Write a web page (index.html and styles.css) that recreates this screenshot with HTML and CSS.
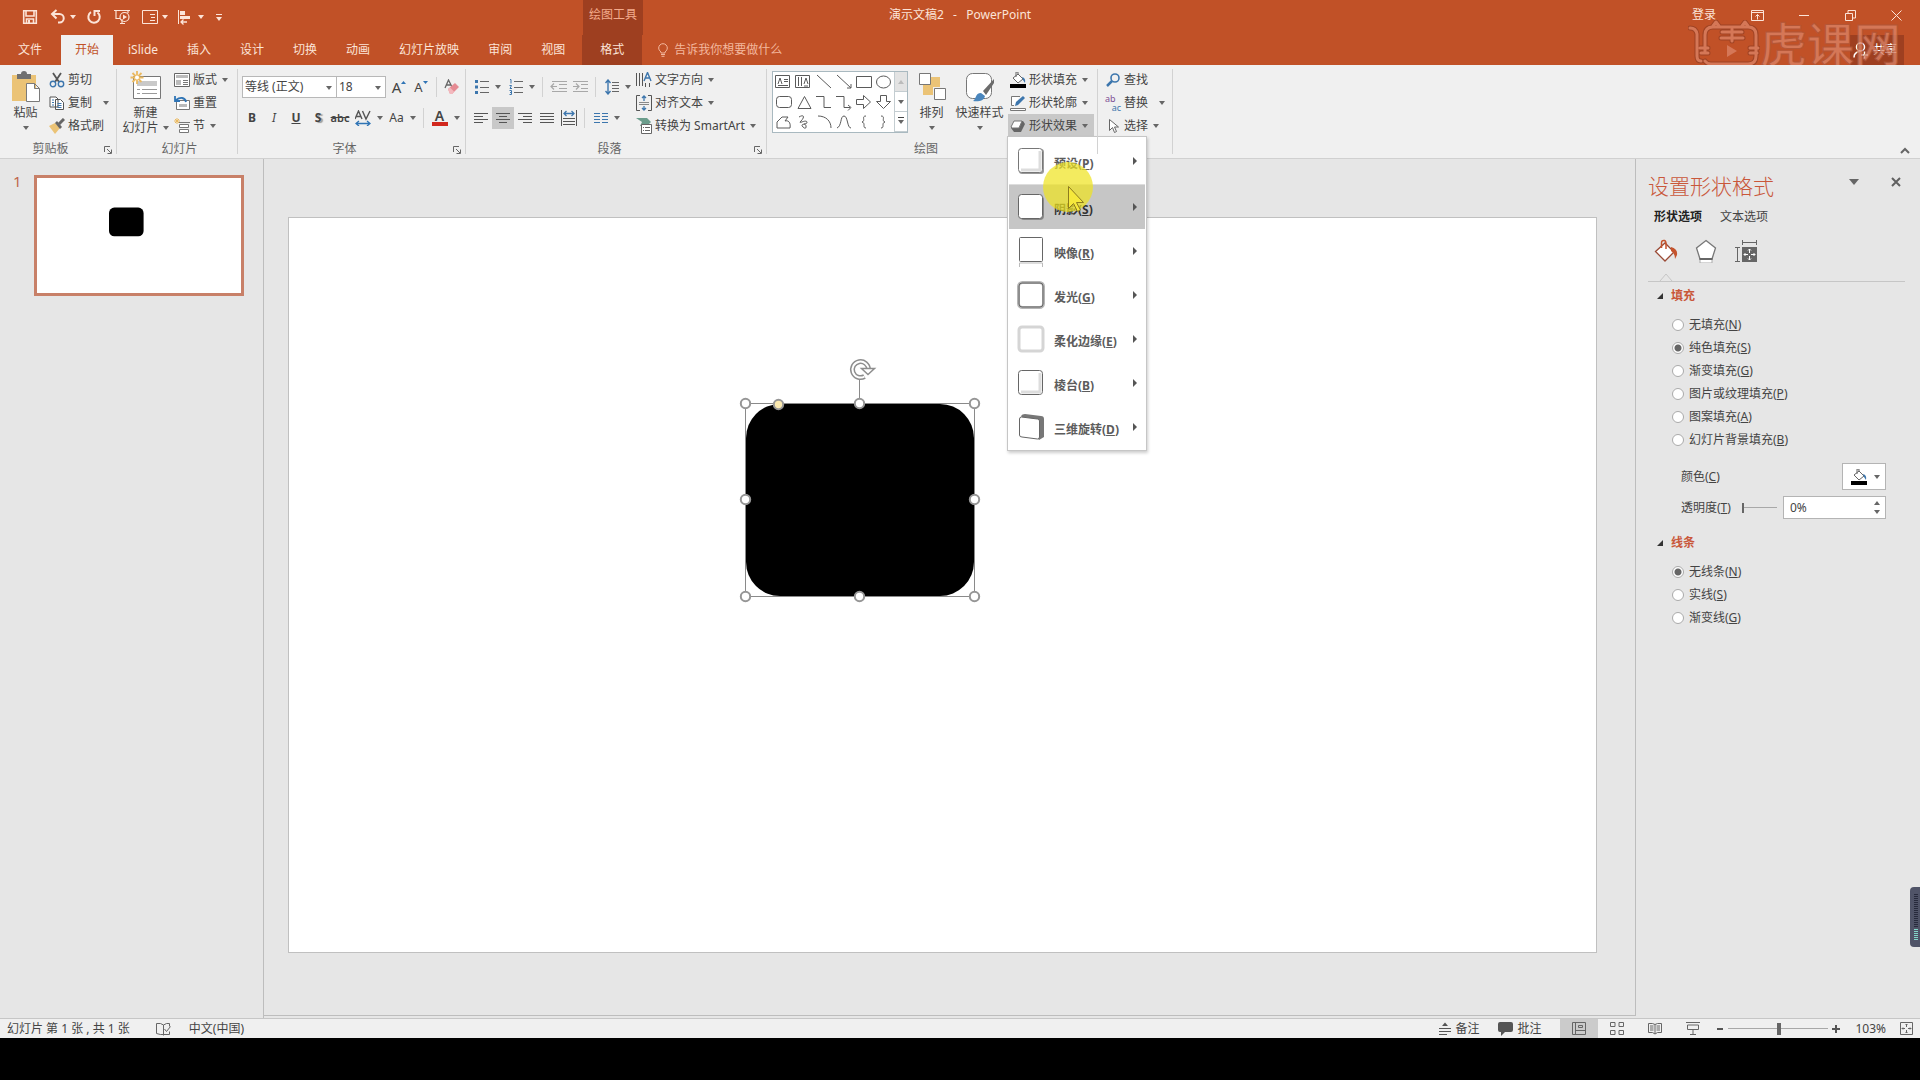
FILE: index.html
```html
<!DOCTYPE html>
<html lang="zh-CN">
<head>
<meta charset="utf-8">
<meta name="viewport" content="width=device-width, initial-scale=1">
<title>演示文稿2 - PowerPoint</title>
<link rel="stylesheet" href="styles.css">
</head>
<body>
<div class="app">

<header class="header">
  <div class="titlebar">
    <div class="title-left">
      <div class="qat">
        <button class="qat-btn" aria-label="保存"><svg width="16" height="16" viewBox="0 0 16 16"><path d="M1.700 1.700h12.600v12.600H1.700zM4 2v5h8V2M4.500 14v-4h7v4" fill="none" stroke="currentColor" stroke-width="1.600"/><path d="M6 11h2v3H6z" fill="currentColor"/></svg></button>
        <button class="qat-btn split" aria-label="撤消"><svg width="16" height="16" viewBox="0 0 16 16"><path d="M2 5h7.500a4.200 4.200 0 0 1 0 8.500H8M6.500 1L2 5l4.500 4.500" fill="none" stroke="currentColor" stroke-width="2"/></svg><i class="caret"></i></button>
        <button class="qat-btn" aria-label="重复"><svg width="16" height="16" viewBox="0 0 16 16"><path d="M5 3.200A5.700 5.700 0 1 0 11.500 3.500M8.500 7V2h5.500" fill="none" stroke="currentColor" stroke-width="2"/></svg></button>
        <button class="qat-btn" aria-label="从头开始"><svg width="16" height="16" viewBox="0 0 16 16"><path d="M0 1.500h16M2 2v7.500h4M14 2v2M6 14.500h5M8 10v4" fill="none" stroke="currentColor" stroke-width="1.200"/><circle cx="10.500" cy="8" r="4.500" fill="none" stroke="currentColor" stroke-width="1.200"/><path d="M9 5.500v5l4-2.500z" fill="currentColor"/></svg></button>
        <button class="qat-btn split" aria-label="版式"><svg width="16" height="16" viewBox="0 0 16 16"><path d="M.5 1.500h15v13H.5zM8 5.500h5M9 8.500h4M8 11.500h5" fill="none" stroke="currentColor"/></svg><i class="caret"></i></button>
        <button class="qat-btn split" aria-label="对齐"><svg width="16" height="16" viewBox="0 0 16 16"><path d="M.5 1v14" stroke="currentColor"/><path d="M2 2h5v4H2zM2 7h10v3H2z" fill="currentColor"/><path d="M9 13H3M5.500 10.500L3 13l2.500 2.500" fill="none" stroke="currentColor" stroke-width="1.300"/></svg><i class="caret"></i></button>
        <button class="qat-btn" aria-label="自定义快速访问工具栏"><i class="caret over"></i></button>
      </div>
      <div class="context-title">绘图工具</div>
    </div>
    <h1 class="doc-title">演示文稿2&nbsp;&nbsp; -&nbsp;&nbsp; PowerPoint</h1>
    <div class="window-tools">
      <a class="login" href="#login">登录</a>
      <button class="win-btn" aria-label="功能区显示选项"><svg width="13" height="11" viewBox="0 0 13 11"><path d="M.5.5h12v10H.5zM.5 2.500h12M6.500 9.500V4.500M4.500 6.500l2-2 2 2" fill="none" stroke="currentColor"/></svg></button>
      <button class="win-btn" aria-label="最小化"><svg width="11" height="11" viewBox="0 0 11 11"><path d="M0 5.500h10" stroke="currentColor"/></svg></button>
      <button class="win-btn" aria-label="还原"><svg width="11" height="11" viewBox="0 0 11 11"><path d="M.5 3.500h7v7h-7zM3 3V.5h7.500V8H8" fill="none" stroke="currentColor"/></svg></button>
      <button class="win-btn" aria-label="关闭"><svg width="11" height="11" viewBox="0 0 11 11"><path d="M.5.5l10 10M10.500.5l-10 10" stroke="currentColor"/></svg></button>
    </div>
  </div>
  <nav class="tabs">
    <button class="tab file">文件</button>
    <button class="tab active">开始</button>
    <button class="tab">iSlide</button>
    <button class="tab">插入</button>
    <button class="tab">设计</button>
    <button class="tab">切换</button>
    <button class="tab">动画</button>
    <button class="tab">幻灯片放映</button>
    <button class="tab">审阅</button>
    <button class="tab">视图</button>
    <button class="tab context">格式</button>
    <button class="tell-me"><svg width="12" height="14" viewBox="0 0 12 14"><path d="M4 10V9C2.500 7.800 1.700 6.500 1.700 5a4.300 4.300 0 0 1 8.600 0c0 1.500-.8 2.800-2.300 4v1zM4 11.500h4M4.500 13.300h3" fill="none" stroke="currentColor"/></svg>告诉我你想要做什么</button>
    <button class="share"><svg width="16" height="17" viewBox="0 0 16 17"><circle cx="7.500" cy="5" r="4" fill="none" stroke="currentColor" stroke-width="1.500"/><path d="M1 15.500c0-3 2-5.500 5.500-6M8 13h7M11.500 9.500v7" fill="none" stroke="currentColor" stroke-width="1.500"/></svg>共享</button>
  </nav>
  <div class="watermark">
    <svg width="72" height="48" viewBox="0 0 72 48" fill="none" stroke-linecap="round" stroke-linejoin="round">
      <g stroke="#943f24" stroke-width="5"><path d="M2 8q6 0 7 6v22q0 5 4 5M17 41q2 3 6 3h37q8 0 8-8V15q0-8-8-8H25q-8 0-8 8v18M25 6l3-4 3 4M54 6l3-4 3 4M34 12h20M44 9v12M33 18h22M12 28h8M13 33h7M62 28h8M62 33h7"/></g>
      <g stroke="#dc8468" stroke-width="3"><path d="M2 8q6 0 7 6v22q0 5 4 5M17 41q2 3 6 3h37q8 0 8-8V15q0-8-8-8H25q-8 0-8 8v18M25 6l3-4 3 4M54 6l3-4 3 4M34 12h20M44 9v12M33 18h22M12 28h8M13 33h7M62 28h8M62 33h7"/></g>
      <path d="M39 25v12l10-6z" fill="#dc8468"/>
    </svg>
    <span>虎课网</span>
  </div>
</header>

<section class="ribbon">
  <div class="group clipboard">
    <div class="group-body">
      <button class="big"><svg width="30" height="32" viewBox="0 0 30 32"><path d="M1 4h24v26H1z" fill="#ebc376"/><path d="M6 3h4a3 3 0 0 1 6 0h4v5H6z" fill="#707070"/><path d="M15.500 12.500h8l5 5v13h-13zM23.500 12.500v5h5" fill="#fff" stroke="#7a7a7a"/></svg><span>粘贴</span><i class="caret"></i></button>
      <div class="rows">
        <button class="row"><svg width="16" height="16" viewBox="0 0 16 16"><path d="M4 1l6 9M12 1l-6 9" stroke="#555" stroke-width="1.800"/><g fill="none" stroke="#3d76ad" stroke-width="1.400"><circle cx="4" cy="12" r="2.700"/><circle cx="12" cy="12" r="2.700"/></g></svg>剪切</button>
        <button class="row"><svg width="16" height="16" viewBox="0 0 16 16"><path d="M1 2h6l2 2v8H1zM6.500 4.500h5l3 3v7h-8z" fill="#fff" stroke="#555"/><path d="M3 5h2M3 7.500h2M3 10h2M8.500 8.500h4M8.500 10.500h4M8.500 12.500h4" stroke="#3d76ad"/></svg>复制<i class="caret far"></i></button>
        <button class="row"><svg width="16" height="16" viewBox="0 0 16 16"><path d="M0 8l6-3 5 5-5 6z" fill="#ebc376"/><path d="M6 5l2-2 5 6-2 2z" fill="#666"/><path d="M10 6l5-5" stroke="#666" stroke-width="3"/></svg>格式刷</button>
      </div>
    </div>
    <div class="group-label launch">剪贴板<button class="launcher" aria-label="剪贴板设置"><svg width="8" height="8" viewBox="0 0 8 8"><path d="M.5 6V.5H6M3 3l4 4M7.500 3.500v4h-4" fill="none" stroke="currentColor"/></svg></button></div>
  </div>

  <div class="group slides">
    <div class="group-body">
      <button class="big"><svg width="32" height="32" viewBox="0 0 32 32"><path d="M3.500 5.500h27v22h-27z" fill="#fff" stroke="#777"/><path d="M7 10h20v5H7z" fill="#c9c9c9"/><path d="M7 18.500h3M12 18.500h15M7 22.500h3M12 22.500h15" stroke="#999"/><path d="M7 0v13M.5 6.500h13M2.500 2l9 9M11.500 2l-9 9" stroke="#ebb95f" stroke-width="1.800"/><circle cx="7" cy="6.500" r="2" fill="#fff"/></svg><span>新建</span><span class="with-caret">幻灯片<i class="caret"></i></span></button>
      <div class="rows">
        <button class="row"><svg width="16" height="16" viewBox="0 0 16 16"><path d="M.5 1.500h15v13H.5z" fill="#fff" stroke="#666"/><path d="M2 3h12v3H2zM2 8h5v5H2z" fill="#bbb"/><path d="M9 8.500h5M9 10.500h5M9 12.500h5" stroke="#777"/></svg>版式<i class="caret"></i></button>
        <button class="row"><svg width="16" height="16" viewBox="0 0 16 16"><path d="M2.500 5.500h13v9h-13z" fill="#fff" stroke="#777"/><path d="M5 9h8v3H5z" fill="#bbb"/><path d="M12 7C11 2 6 2 2 5M1 1v5h5" fill="none" stroke="#2f74b5" stroke-width="1.800"/></svg>重置</button>
        <button class="row"><svg width="16" height="16" viewBox="0 0 16 16"><path d="M4 4.500h12M5.500 6.500h9v3h-9zM5.500 11.500h9v3h-9z" fill="#fff" stroke="#777"/><path d="M3 0v6M0 3h6M1 1l4 4M5 1L1 5" stroke="#ebb95f"/></svg>节<i class="caret"></i></button>
      </div>
    </div>
    <div class="group-label">幻灯片</div>
  </div>

  <div class="group font">
    <div class="group-body stack">
      <div class="tools">
        <label class="combo wide"><select aria-label="字体"><option>等线 (正文)</option></select></label>
        <label class="combo size"><select aria-label="字号"><option>18</option></select></label>
        <button class="tool glyph-lg" aria-label="增大字号">A<svg width="5" height="14" viewBox="0 0 5 14"><path d="M0 4l2.500-3L5 4z" fill="#2f74b5"/></svg></button>
        <button class="tool glyph-md" aria-label="减小字号">A<svg width="5" height="14" viewBox="0 0 5 14"><path d="M0 1l2.500 3L5 1z" fill="#2f74b5"/></svg></button>
        <i class="sep"></i>
        <button class="tool" aria-label="清除格式"><svg width="16" height="16" viewBox="0 0 16 16"><path d="M1 9L4.500 1 8 8M2.500 6h4" fill="none" stroke="#666" stroke-width="1.300"/><path d="M4 10l7-6 4 4-7 7H6z" fill="#e58b93"/><path d="M4 10l2-1.500 4 4L8 15H6z" fill="#f3b8bd"/></svg></button>
      </div>
      <div class="tools">
        <button class="tool"><b>B</b></button>
        <button class="tool"><em>I</em></button>
        <button class="tool"><b><u>U</u></b></button>
        <button class="tool shadow"><b>S</b></button>
        <button class="tool small-glyph"><s>abc</s></button>
        <button class="tool split-tool" aria-label="字符间距"><svg width="16" height="16" viewBox="0 0 16 16"><path d="M0 9l3.500-8L7 9M1.500 6.500h4M7.500 1L11 9l4-8" fill="none" stroke="#555" stroke-width="1.400"/><path d="M1 13.500h14M4 11l-3 2.500L4 16M12 11l3 2.500-3 2.500" fill="none" stroke="#2f74b5" stroke-width="1.300"/></svg><i class="caret"></i></button>
        <button class="tool split-tool">Aa<i class="caret"></i></button>
        <i class="sep"></i>
        <button class="tool split-tool" aria-label="字体颜色"><span class="font-color">A</span><i class="caret"></i></button>
      </div>
    </div>
    <div class="group-label launch">字体<button class="launcher" aria-label="字体设置"><svg width="8" height="8" viewBox="0 0 8 8"><path d="M.5 6V.5H6M3 3l4 4M7.500 3.500v4h-4" fill="none" stroke="currentColor"/></svg></button></div>
  </div>

  <div class="group para">
    <div class="group-body">
      <div class="stack">
        <div class="tools">
          <button class="tool split-tool" aria-label="项目符号"><svg width="14" height="16" viewBox="0 0 14 16"><path d="M0 1h3v3H0zM0 6.500h3v3H0zM0 12h3v3H0z" fill="#3d76ad"/><path d="M5 2.500h9M5 8.500h9M5 13.500h9" stroke="#666"/></svg><i class="caret"></i></button>
          <button class="tool split-tool" aria-label="编号"><svg width="14" height="16" viewBox="0 0 14 16"><path d="M1 .5h1v4M.5 6.500h2L1 9.500h2M.5 11.500h2v4h-2M1 13.500h1" fill="none" stroke="#3d76ad"/><path d="M5 2.500h9M5 8.500h9M5 13.500h9" stroke="#666"/></svg><i class="caret"></i></button>
          <i class="sep"></i>
          <button class="tool" aria-label="降低列表级别"><svg width="17" height="14" viewBox="0 0 17 14"><path d="M2 1.500h15M9 4.500h8M9 8.500h8M2 11.500h15M1 6.500h6M4 3.500l-3 3 3 3" fill="none" stroke="#a8a8a8" stroke-width="1.200"/></svg></button>
          <button class="tool" aria-label="提高列表级别"><svg width="17" height="14" viewBox="0 0 17 14"><path d="M1 1.500h15M9 4.500h7M9 8.500h7M1 11.500h15M1 6.500h6M4 3.500l3 3-3 3" fill="none" stroke="#a8a8a8" stroke-width="1.200"/></svg></button>
          <i class="sep"></i>
          <button class="tool split-tool" aria-label="行距"><svg width="14" height="16" viewBox="0 0 14 16"><path d="M3 1v14M.5 4L3 1l2.500 3M.5 12L3 15l2.500-3" fill="none" stroke="#3d76ad" stroke-width="1.400"/><path d="M7 3.500h7M7 6.500h7M7 9.500h7M7 12.500h7" stroke="#666"/></svg><i class="caret"></i></button>
        </div>
        <div class="tools">
          <button class="tool" aria-label="左对齐"><svg width="14" height="12" viewBox="0 0 14 12"><path d="M0 1.500h14M0 4.500h9M0 7.500h14M0 10.500h9" stroke="#555"/></svg></button>
          <button class="tool pressed" aria-label="居中"><svg width="14" height="12" viewBox="0 0 14 12"><path d="M0 1.500h14M3 4.500h8M0 7.500h14M3 10.500h8" stroke="#555"/></svg></button>
          <button class="tool" aria-label="右对齐"><svg width="14" height="12" viewBox="0 0 14 12"><path d="M0 1.500h14M5 4.500h9M0 7.500h14M5 10.500h9" stroke="#555"/></svg></button>
          <button class="tool" aria-label="两端对齐"><svg width="14" height="12" viewBox="0 0 14 12"><path d="M0 1.500h14M0 4.500h14M0 7.500h14M0 10.500h14" stroke="#555"/></svg></button>
          <button class="tool" aria-label="分散对齐"><svg width="16" height="16" viewBox="0 0 16 16"><path d="M.5 0v16M15.500 0v16M2 8.500h12M2 11.500h12M2 14.500h12" stroke="#555"/><path d="M3 3.500h10M5.500 1L3 3.500 5.500 6M10.500 1L13 3.500 10.500 6" fill="none" stroke="#3d76ad" stroke-width="1.300"/></svg></button>
          <i class="sep"></i>
          <button class="tool split-tool" aria-label="分栏"><svg width="14" height="12" viewBox="0 0 14 12"><path d="M0 1.500h6M8 1.500h6M0 4.500h6M8 4.500h6M0 7.500h6M8 7.500h6M0 10.500h6M8 10.500h6" stroke="#3d76ad"/></svg><i class="caret"></i></button>
        </div>
      </div>
      <div class="rows">
        <button class="row"><svg width="16" height="16" viewBox="0 0 16 16"><path d="M.5 1v13M3.500 1v13M6.500 1v13M9.500 11v4M13.500 11v4" stroke="#555"/><path d="M8 9l3.500-8.500L15 9M9 6h5" fill="none" stroke="#3d76ad" stroke-width="1.400"/></svg>文字方向<i class="caret"></i></button>
        <button class="row"><svg width="16" height="16" viewBox="0 0 16 16"><path d="M4 .5H.5v15H4M12 .5h3.500v15H12" fill="none" stroke="#555"/><path d="M3 7.500h10M3 9.500h10" stroke="#888"/><path d="M8 6V1M6 3l2-2 2 2M8 11v4M6 13l2 2 2-2" fill="none" stroke="#3d76ad" stroke-width="1.300"/></svg>对齐文本<i class="caret"></i></button>
        <button class="row"><svg width="16" height="16" viewBox="0 0 16 16"><path d="M0 0h11l4 4-4 4H4l2-4z" fill="#6b9d8c"/><path d="M5.500 6.500h10v9h-10z" fill="#fff" stroke="#666"/><path d="M7 9.500h1M9 9.500h5M7 12.500h1M9 12.500h5" stroke="#666"/></svg>转换为 SmartArt<i class="caret"></i></button>
      </div>
    </div>
    <div class="group-label launch">段落<button class="launcher" aria-label="段落设置"><svg width="8" height="8" viewBox="0 0 8 8"><path d="M.5 6V.5H6M3 3l4 4M7.500 3.500v4h-4" fill="none" stroke="currentColor"/></svg></button></div>
  </div>

  <div class="group drawing">
    <div class="group-body">
      <div class="gallery">
        <svg width="121" height="60" viewBox="0 0 121 60" fill="none" stroke="#5a5a5a">
          <path d="M2.500 3.500h14v12h-14zM5 12l2-6 2 6M11 7.500h4M11 9.500h4M5 13.500h10"/>
          <path d="M22.500 3.500h14v12h-14zM25.500 5v9M28.500 5v9M31 12l2-6 2 6M31 14h4"/>
          <path d="M44 3l14 13M64 3l14 13M78 12v4h-4M83.500 4.500h15v11h-15z"/>
          <ellipse cx="110.500" cy="10" rx="7" ry="6"/>
          <rect x="3.500" y="24.500" width="15" height="11" rx="3"/>
          <path d="M31.500 24.500l6.500 12H25zM43 24.500h8v11h7M63 24.500h8v11h6M75 33l3 2.500-3 3M83.500 27.500h7v-4l7 6.500-7 6.500v-4h-7zM107.500 23.500h6v6h4l-7 7-7-7h4z"/>
          <path d="M4 56V50l5-5h6l-3 4c3-1 6 1 5 7zM26 45c5-3 6 0 2 4s5-2 6 1-8 1-4 5 4-3 1-3M45 44c8 0 13 5 13 12M64 56c5-2 3-12 7-12s3 12 7 12M93 44c-5 0 0 5-4 6 4 1 0 6 4 6M108 44c5 0 0 5 4 6-4 1 0 6-4 6"/>
        </svg>
        <div class="gallery-nav">
          <button class="disabled" aria-label="上一行"><i class="caret up"></i></button>
          <button aria-label="下一行"><i class="caret"></i></button>
          <button aria-label="其他形状"><i class="caret over"></i></button>
        </div>
      </div>
      <button class="big"><svg width="30" height="32" viewBox="0 0 30 32"><path d="M13 6h10v10H13zM6 14h10v10H6z" fill="#ebc376"/><path d="M2.500 2.500h11v11h-11zM17.500 17.500h11v11h-11z" fill="#fff" stroke="#777"/></svg><span>排列</span><i class="caret"></i></button>
      <button class="big styles"><svg width="30" height="32" viewBox="0 0 30 32"><rect x="1.500" y="2.500" width="25" height="25" rx="6" fill="#fff" stroke="#777"/><path d="M18 20l11-12v4l-8 12z" fill="#6b6b6b"/><path d="M8 30c3-1 2-8 8-8l4 3c-1 5-7 6-12 5z" fill="#4a86bd"/></svg><span>快速样式</span><i class="caret"></i></button>
      <div class="rows">
        <button class="row"><svg width="16" height="16" viewBox="0 0 16 16"><path d="M3 6l5-4 5 5-5 4zM6 5V0h2v3" fill="#fff" stroke="#666"/><path d="M12 5q4 1 3 6l-2-3z" fill="#3d76ad"/><path d="M0 12h16v4H0z" fill="#000"/></svg>形状填充<i class="caret"></i></button>
        <button class="row"><svg width="16" height="16" viewBox="0 0 16 16"><path d="M10 1.500H1.500v9H4M.5 13.500h15v2H.5z" fill="#fff" stroke="#777"/><path d="M5 11l1-4 7-6 2 2-7 7z" fill="#3d76ad"/></svg>形状轮廓<i class="caret"></i></button>
        <div class="menu-host">
          <button class="row open" aria-expanded="true"><svg width="16" height="16" viewBox="0 0 16 16"><path d="M1 10l4-7h8l2 3-4 8H4z" fill="#666"/><path d="M1 9l3-6h8l-3 7H2z" fill="#fff" stroke="#777"/></svg>形状效果<i class="caret"></i></button>
          <div class="menu" role="menu">
            <button class="menu-item first" role="menuitem"><svg width="28" height="28" viewBox="0 0 28 28"><rect x="2" y="2" width="25" height="25" rx="3" fill="#999"/><rect x="1.500" y="1.500" width="24" height="24" rx="3" fill="#fff" stroke="#777"/><path d="M23 4v19H4" fill="none" stroke="#ddd" stroke-width="3"/></svg><span>预设(<u>P</u>)</span><i class="sub"></i></button>
            <button class="menu-item hover" role="menuitem"><svg width="28" height="28" viewBox="0 0 28 28"><rect x="3" y="3" width="24" height="24" rx="4" fill="#888"/><rect x="1.500" y="1.500" width="24" height="24" rx="3" fill="#fff" stroke="#666"/></svg><span>阴影(<u>S</u>)</span><i class="sub"></i></button>
            <button class="menu-item" role="menuitem"><svg width="28" height="32" viewBox="0 0 28 32"><rect x="2.500" y="2.500" width="23" height="24" rx="1" fill="#fff" stroke="#666"/><path d="M2.500 32v-4h23v4" fill="none" stroke="#bbb"/></svg><span>映像(<u>R</u>)</span><i class="sub"></i></button>
            <button class="menu-item" role="menuitem"><svg width="28" height="28" viewBox="0 0 28 28"><rect x="1.500" y="1.500" width="25" height="25" rx="4" fill="#fff" stroke="#b5b5b5" stroke-width="3"/><rect x="2" y="2" width="24" height="24" rx="3" stroke="#666" fill="none"/></svg><span>发光(<u>G</u>)</span><i class="sub"></i></button>
            <button class="menu-item" role="menuitem"><svg width="28" height="28" viewBox="0 0 28 28"><rect x="2" y="2" width="24" height="24" rx="3" fill="#fff" stroke="#d5d5d5" stroke-width="3"/></svg><span>柔化边缘(<u>E</u>)</span><i class="sub"></i></button>
            <button class="menu-item" role="menuitem"><svg width="28" height="28" viewBox="0 0 28 28"><rect x="1.500" y="1.500" width="24" height="24" rx="3" fill="#fff" stroke="#666"/><path d="M23 4v19H4" fill="none" stroke="#ddd" stroke-width="3"/></svg><span>棱台(<u>B</u>)</span><i class="sub"></i></button>
            <button class="menu-item" role="menuitem"><svg width="28" height="28" viewBox="0 0 28 28"><path d="M4 3q1-2 4-2l16 2q3 0 3 3v18l-5 3z" fill="#777"/><path d="M2.500 6q0-2 2-2l16 2q2 0 2 2v16q0 2-2 2L5 24q-2.500 0-2.500-2z" fill="#fff" stroke="#666"/></svg><span>三维旋转(<u>D</u>)</span><i class="sub"></i></button>
            <svg class="pointer" width="50" height="50" viewBox="0 0 50 50"><circle cx="25" cy="25" r="25" fill="#efe321" fill-opacity=".72"/><path d="M25.500 24.500v22l5-5 4 8 3-1.500-4-7.500h7z" fill="#f5e93c" stroke="#8d7c1e"/></svg>
          </div>
        </div>
      </div>
    </div>
    <div class="group-label launch">绘图</div>
  </div>

  <div class="group editing">
    <div class="group-body">
      <div class="rows">
        <button class="row"><svg width="16" height="16" viewBox="0 0 16 16"><circle cx="10" cy="6" r="4" fill="none" stroke="#3d76ad" stroke-width="1.600"/><path d="M7 9l-5 5" stroke="#3d76ad" stroke-width="2.500"/></svg>查找</button>
        <button class="row"><span class="replace-icon"><span>ab</span><span>ac</span></span>替换<i class="caret far"></i></button>
        <button class="row"><svg width="16" height="16" viewBox="0 0 16 16"><path d="M4.500 1.500v11l3-3 2 5 2-1-2-4.500h4z" fill="#fff" stroke="#666"/></svg>选择<i class="caret"></i></button>
      </div>
    </div>
  </div>
  <button class="collapse" aria-label="折叠功能区"><svg width="10" height="7" viewBox="0 0 10 7"><path d="M1 6l4-4 4 4" fill="none" stroke="#666" stroke-width="2"/></svg></button>
</section>

<main class="main">
  <aside class="thumbs">
    <span class="thumb-no">1</span>
    <button class="thumb" aria-label="幻灯片 1"><svg viewBox="0 0 1309 736"><rect x="462" y="190" width="222" height="184" rx="34"/></svg></button>
  </aside>

  <div class="canvas">
    <svg class="slide" viewBox="0 0 1309 736">
      <rect x="458" y="187" width="228" height="192" rx="34"/>
      <g fill="none" stroke="#8a8a8a">
        <path d="M457.500 186.500h229v193h-229zM571.500 163v24"/>
      </g>
      <g fill="#fff" stroke="#969696" stroke-width="2">
        <circle cx="457.500" cy="186.500" r="4.700"/><circle cx="571.500" cy="186.500" r="4.700"/><circle cx="686.500" cy="186.500" r="4.700"/>
        <circle cx="457.500" cy="282.500" r="4.700"/><circle cx="686.500" cy="282.500" r="4.700"/>
        <circle cx="457.500" cy="379.500" r="4.700"/><circle cx="571.500" cy="379.500" r="4.700"/><circle cx="686.500" cy="379.500" r="4.700"/>
        <circle cx="490.500" cy="187.500" r="4.700" fill="#fbe9b0"/>
      </g>
      <path d="M576.500 159.500a8 8 0 1 1 4-7" fill="none" stroke="#8e8e8e" stroke-width="5"/>
      <path d="M576.500 159.500a8 8 0 1 1 4-7" fill="none" stroke="#fff" stroke-width="2"/>
      <path d="M573.500 151.500h13l-6.500 6z" fill="#fff" stroke="#8e8e8e" stroke-width="1.500"/>
    </svg>
  </div>

  <aside class="pane">
    <div class="pane-head">
      <h2>设置形状格式</h2>
      <button class="pane-btn" aria-label="任务窗格选项"><svg width="10" height="6" viewBox="0 0 10 6"><path d="M0 0h10L5 6z" fill="#666"/></svg></button>
      <button class="pane-btn" aria-label="关闭窗格"><svg width="10" height="10" viewBox="0 0 10 10"><path d="M1 1l8 8M9 1L1 9" stroke="#606060" stroke-width="2"/></svg></button>
    </div>
    <div class="pane-tabs">
      <button class="current">形状选项</button>
      <button>文本选项</button>
    </div>
    <div class="pane-icons">
      <button aria-label="填充与线条"><svg width="24" height="24" viewBox="0 0 24 24"><path d="M1.500 12.500L11 4l9 9-9 9z" fill="#fff" stroke="#9a4a35" stroke-width="1.300"/><path d="M7.500 9V4q0-3 3-2.500Q12 2 12 5v5" fill="none" stroke="#c5532c" stroke-width="1.500"/><path d="M17 8q7 2 6 8l-2 4q0-6-4-8z" fill="#c5532c"/></svg></button>
      <button aria-label="效果"><svg width="24" height="24" viewBox="0 0 24 24"><path d="M12 1.500l9.500 7.500-3.500 11H6L2.500 9z" fill="#fff" stroke="#777" stroke-width="1.300"/><path d="M6 20v4h12v-4z" fill="#fff" stroke="#aaa"/><path d="M5.500 20h13" stroke="#666" stroke-width="2"/></svg></button>
      <button aria-label="大小与属性"><svg width="24" height="24" viewBox="0 0 24 24"><path d="M8 8h15v15H8z" fill="#666"/><path d="M8 3.500h15M8.500 1v5M22.500 1v5M3.500 8v14M1 8.500h5M1 22.500h5" stroke="#666"/><path d="M15.500 10v4M15.500 17v4M10 15.500h4M17 15.500h4M14 11.500l1.500-1.500 1.500 1.500M14 19.500l1.500 1.500 1.500-1.500M11.500 14L10 15.500l1.500 1.500M19.500 14l1.500 1.500-1.500 1.500" fill="none" stroke="#fff"/></svg></button>
    </div>
    <div class="pane-rule"><svg width="14" height="9" viewBox="0 0 14 9"><path d="M1 8.500l6-7 6 7" fill="#e6e6e6" stroke="#c6c6c6"/></svg></div>

    <h3 class="section">填充</h3>
    <div class="radios">
      <label><input type="radio" name="fill">无填充(<u>N</u>)</label>
      <label><input type="radio" name="fill" checked>纯色填充(<u>S</u>)</label>
      <label><input type="radio" name="fill">渐变填充(<u>G</u>)</label>
      <label><input type="radio" name="fill">图片或纹理填充(<u>P</u>)</label>
      <label><input type="radio" name="fill">图案填充(<u>A</u>)</label>
      <label><input type="radio" name="fill">幻灯片背景填充(<u>B</u>)</label>
    </div>
    <div class="field color-field">
      <span>颜色(<u>C</u>)</span>
      <button class="color-btn" aria-label="填充颜色"><svg width="16" height="16" viewBox="0 0 16 16"><path d="M3 6l5-4 5 5-5 4zM6 5V0h2v3" fill="#fff" stroke="#666"/><path d="M12 5q4 1 3 6l-2-3z" fill="#3d76ad"/><path d="M0 12h16v4H0z" fill="#000"/></svg><i class="caret"></i></button>
    </div>
    <div class="field">
      <label for="alpha">透明度(<u>T</u>)</label>
      <input class="alpha-slider" type="range" value="0" aria-label="透明度滑块">
      <div class="spin"><input id="alpha" type="text" value="0%"><span class="spin-arrows"><i class="caret up"></i><i class="caret"></i></span></div>
    </div>
    <h3 class="section line">线条</h3>
    <div class="radios">
      <label><input type="radio" name="line" checked>无线条(<u>N</u>)</label>
      <label><input type="radio" name="line">实线(<u>S</u>)</label>
      <label><input type="radio" name="line">渐变线(<u>G</u>)</label>
    </div>
    <svg class="recorder" width="10" height="60" viewBox="0 0 10 60"><path d="M10 0H4Q0 0 0 4v52q0 4 4 4h6z" fill="#505468"/><path d="M6 7v33" stroke="#272a3c" stroke-width="4" stroke-dasharray="1 1"/><path d="M6 42v11" stroke="#82d6c8" stroke-width="4" stroke-dasharray="1 1"/></svg>
  </aside>
</main>

<footer class="status">
  <span>幻灯片 第 1 张 , 共 1 张</span>
  <button class="proof" aria-label="校对"><svg width="15" height="14" viewBox="0 0 15 14"><path d="M7.500 12.500H4.500L.5 11.500V1.500h4l3 1.500v10.500M7.500 3l3-1.500h3v3M7.500 12.500h6v-3M8.500 7l2 2.500 4-5" fill="none" stroke="#666"/></svg></button>
  <span>中文(中国)</span>
  <div class="status-right">
    <button class="note"><svg width="12" height="13" viewBox="0 0 12 13"><path d="M3 4l3-3.500L9 4z" fill="#555"/><path d="M0 6.500h12M0 9.500h12M0 12.500h8" stroke="#555"/></svg>备注</button>
    <button class="note"><svg width="15" height="14" viewBox="0 0 15 14"><path d="M2 0h11q2 0 2 2v6q0 2-2 2H7l-4 4v-4H2q-2 0-2-2V2q0-2 2-2z" fill="#555"/></svg>批注</button>
    <div class="views">
      <button class="current" aria-label="普通视图"><svg width="14" height="13" viewBox="0 0 14 13"><path d="M.5.5h13v12H.5zM3.500.5v12M3.500 8.500h10M6.500 3.500h4v2h-4z" fill="none" stroke="#666"/></svg></button>
      <button aria-label="幻灯片浏览"><svg width="14" height="13" viewBox="0 0 14 13"><path d="M.5.5h4.500v4H.5zM9 .5h4.500v4H9zM.5 8.500h4.500v4H.5zM9 8.500h4.500v4H9z" fill="none" stroke="#666"/></svg></button>
      <button aria-label="阅读视图"><svg width="14" height="13" viewBox="0 0 14 13"><path d="M.5 1.500h4L7 2.500l2.500-1h4v9h-4L7 12l-2.500-1.500h-4zM7 2.500V12M2 4h3.500M2 6h3.500M2 8h3.500M8.500 4H12M8.500 6H12M8.500 8H12" fill="none" stroke="#666"/></svg></button>
      <button aria-label="幻灯片放映"><svg width="14" height="13" viewBox="0 0 14 13"><path d="M0 .5h14M1.500 3h11v4.500h-11zM7 8v4M4 12.500h6" fill="none" stroke="#666"/></svg></button>
    </div>
    <button class="zoom-btn" aria-label="缩小"><svg width="8" height="8" viewBox="0 0 8 8"><path d="M1 4h6" stroke="#555" stroke-width="2"/></svg></button>
    <input class="zoom" type="range" value="51" aria-label="缩放">
    <button class="zoom-btn" aria-label="放大"><svg width="8" height="8" viewBox="0 0 8 8"><path d="M0 4h8M4 0v8" stroke="#555" stroke-width="2"/></svg></button>
    <button class="percent">103%</button>
    <button class="fit" aria-label="适应窗口"><svg width="13" height="13" viewBox="0 0 13 13"><path d="M.5.5h12v12H.5zM6.500 2v3M6.500 8v3M2 6.500h3M8 6.500h3M5.500 3l1-1 1 1M5.500 10l1 1 1-1M3 5.500l-1 1 1 1M10 5.500l1 1-1 1" fill="none" stroke="#666"/></svg></button>
  </div>
</footer>
</div>
</body>
</html>
```
FILE: styles.css
```css
* { box-sizing: border-box; }

body {
  margin: 0;
  min-height: 100vh;
  padding-bottom: 42px;
  display: flex;
  background: #000;
  color: #444;
  font: 12px/16px "Noto Sans", "Noto Sans CJK SC", sans-serif;
}

button, input, select {
  margin: 0;
  padding: 0;
  border: 0;
  background: none;
  color: inherit;
  font: inherit;
}
button { white-space: nowrap; }
svg { display: block; flex: none; }
h1, h2, h3 { margin: 0; font-weight: 400; }

.app { flex: 1; min-width: 0; display: flex; flex-direction: column; background: #e6e6e6; }

.caret {
  flex: none;
  width: 0;
  height: 0;
  border: 3px solid transparent;
  border-top: 4px solid #666;
  border-bottom: 0;
}
.caret.up { border-top: 0; border-bottom: 4px solid #666; }
.caret.over { position: relative; }
.caret.over::before {
  content: "";
  position: absolute;
  left: -3px;
  top: -7px;
  width: 6px;
  height: 1px;
  background: currentColor;
}

/* Header */
.header { position: relative; background: #c15127; color: #fce4d8; }
.titlebar { display: grid; grid-template-columns: 1fr auto 1fr; height: 35px; }
.title-left { display: flex; }
.qat { width: 583px; display: flex; align-items: center; padding: 0 0 2px 22px; }
.qat-btn { width: 28px; height: 24px; display: flex; align-items: center; gap: 4px; }
.qat-btn.split { width: 36px; }
.qat .caret { border-top-color: #fce4d8; }
.qat-btn .over { margin: 4px 0 0 2px; }
.context-title {
  width: 60px;
  padding-top: 7px;
  background: #9e3f20;
  color: #f3ab8d;
  text-align: center;
}
.doc-title { padding-top: 7px; font-size: 12px; line-height: 16px; }
.window-tools { display: flex; justify-content: flex-end; align-items: flex-start; gap: 35px; padding: 7px 18px 0 0; }
.window-tools a { color: inherit; text-decoration: none; }
.win-btn { height: 16px; }

.tabs { display: flex; gap: 1px; height: 30px; }
.tab { padding: 0 14px; }
.tab.file { width: 60px; }
.tab.active { background: #f0f0f0; color: #c15127; }
.tab.context { width: 60px; margin-left: 2px; background: #9e3f20; }
.tell-me { display: flex; align-items: center; gap: 5px; padding-left: 14px; color: #f3b79d; }
.share {
  display: flex;
  align-items: center;
  gap: 4px;
  width: 54px;
  margin: 0 16px 0 auto;
  padding-left: 3px;
  background: #9e3f20;
  color: #fff;
}
.watermark {
  position: absolute;
  right: 19px;
  top: 20px;
  display: flex;
  opacity: .75;
  pointer-events: none;
  color: #dc8468;
  -webkit-text-stroke: 1px #b0583c;
  font-size: 47px;
  font-weight: 500;
  line-height: 48px;
}

/* Ribbon */
.ribbon {
  position: relative;
  z-index: 2;
  display: flex;
  height: 94px;
  padding-top: 3px;
  background: #f0f0f0;
  border-bottom: 1px solid #d0d0d0;
}
.group {
  position: relative;
  flex: none;
  display: flex;
  flex-direction: column;
  justify-content: space-between;
}
.group::after {
  content: "";
  position: absolute;
  right: 0;
  top: 1px;
  bottom: 4px;
  width: 1px;
  background: #d2d2d2;
}
.clipboard { width: 117px; padding-left: 2px; }
.slides { width: 121px; padding-left: 4px; }
.font { width: 228px; padding-left: 3px; }
.para { width: 301px; padding-left: 4px; }
.drawing { width: 331px; padding-left: 5px; }
.editing { width: 75px; padding-left: 7px; }
.group-body { display: flex; }
.group-label { position: relative; height: 17px; text-align: center; color: #666; }
.group-label.launch { padding-right: 18px; }
.launcher { position: absolute; right: 5px; top: 5px; }

.big { width: 47px; display: flex; flex-direction: column; align-items: center; line-height: 15px; }
.big svg { margin: 3px 0 2px; }
.big .caret { margin-top: 6px; }
.with-caret { display: flex; align-items: center; gap: 4px; }
.big .with-caret .caret { margin: 0; }
.slides .big { width: 49px; }
.slides .rows { margin-left: 4px; }
.rows { display: flex; flex-direction: column; align-items: flex-start; }
.row { height: 23px; display: flex; align-items: center; gap: 3px; }
.row .caret { margin-left: 2px; }
.row .far { margin-left: 8px; }

.stack { display: flex; flex-direction: column; gap: 9px; padding-top: 8px; }
.group-body .stack { width: 166px; }
.tools { display: flex; align-items: center; height: 22px; }
.tool { width: 22px; height: 22px; display: flex; justify-content: center; align-items: center; }
.split-tool { width: 34px; gap: 6px; padding-left: 1px; }
.pressed { background: #c8c8c8; }
.sep { width: 1px; height: 20px; margin: 0 4px; background: #d2d2d2; }
.shadow { text-shadow: 2px 1px 1px #999; }
.small-glyph { font-size: 11px; font-weight: 600; }
.glyph-lg { font-size: 15px; }
.glyph-md { font-size: 13px; }
.font-color { width: 16px; height: 16px; border-bottom: 4px solid #d2281e; font-weight: 600; font-size: 14px; line-height: 12px; }
.combo { position: relative; height: 22px; border: 1px solid #b8b8b8; background: #fff; }
.combo.wide { width: 95px; margin: 0 -1px 0 1px; }
.combo.size { width: 50px; margin-right: 2px; }
.combo select { width: 100%; height: 20px; padding-left: 2px; appearance: none; }
.combo::after {
  content: "";
  position: absolute;
  right: 4px;
  top: 9px;
  border: 3px solid transparent;
  border-top: 4px solid #666;
  border-bottom: 0;
}

.gallery { display: flex; width: 136px; height: 62px; margin: 3px 0 0; border: 1px solid #a9b9c0; background: #fff; }
.gallery-nav { display: grid; grid-template-rows: 1fr 1fr 1fr; width: 13px; }
.gallery-nav button { display: grid; place-items: center; border: solid #c4cdd1; border-width: 0 0 1px 1px; }
.gallery-nav .disabled { background: #e3e3e3; }
.gallery-nav .disabled .caret { border-bottom-color: #bbb; }

.drawing .styles { width: 49px; }
.drawing .rows { flex: 1; padding-left: 6px; }
.open { width: 86px; margin-left: -2px; padding-left: 2px; background: #c8c8c8; }

.menu-host { position: relative; }
.menu {
  position: absolute;
  left: -3px;
  top: 22px;
  width: 140px;
  padding: 1px;
  border: 1px solid #c6c6c6;
  background: #fff;
  box-shadow: 1px 2px 3px rgba(0, 0, 0, .2);
}
.menu-item {
  display: flex;
  align-items: center;
  width: 100%;
  height: 44px;
  padding: 0 8px;
  font-weight: 700;
  color: #5c5c5c;
}
.menu-item span { flex: 1; margin-left: 9px; padding-top: 6px; text-align: left; }
.menu-item.first { height: 47px; border-bottom: 1px solid #ddd; }
.menu-item.hover { background: #c6c6c6; color: #333; }
.sub { border: 4px solid transparent; border-left: 4px solid #555; border-right: 0; }
.pointer { position: absolute; left: 35px; top: 25px; }

.replace-icon { width: 16px; font-size: 9px; line-height: 9px; color: #7f5095; text-align: left; }
.replace-icon span { display: block; }
.replace-icon span + span { color: #3d76ad; text-align: right; }
.collapse { margin: 76px 10px 0 auto; height: 12px; }

/* Work area */
.main { flex: 1; display: flex; }
.thumbs {
  flex: none;
  display: flex;
  align-items: flex-start;
  width: 264px;
  padding: 16px 0 0 13px;
  border-right: 1px solid #bdbdbd;
}
.thumb-no { width: 21px; font-size: 15px; line-height: 12px; color: #c0684c; }
.thumb { width: 210px; border: 3px solid #c88068; background: #fff; }
.thumb svg { width: 100%; height: auto; }
.canvas {
  flex: 1;
  min-width: 0;
  margin-bottom: 2px;
  padding: 58px 38px 60px 24px;
  border: solid #bdbdbd;
  border-width: 0 1px 1px 0;
}
.slide { width: 100%; height: auto; background: #fff; outline: 1px solid #c0c0c0; outline-offset: -1px; }

/* Format pane */
.pane { position: relative; flex: none; width: 284px; padding: 11px 15px 0 12px; }
.pane-head { display: flex; align-items: flex-start; height: 39px; }
.pane-head h2 { flex: 1; font-size: 21px; line-height: 32px; font-weight: 300; color: #c9573a; }
.pane-btn { width: 30px; height: 24px; display: grid; place-items: center; }
.pane-btn + .pane-btn { margin: 0 -6px 0 12px; }
.pane-tabs { display: flex; gap: 18px; padding-left: 6px; }
.pane-tabs .current { font-weight: 600; color: #222; }
.pane-icons { display: flex; gap: 16px; padding: 14px 0 0 6px; }
.pane-rule { height: 19px; padding: 9px 0 0 11px; border-bottom: 1px solid #c6c6c6; }
.pane-rule svg { height: 10px; }
.section {
  display: flex;
  align-items: center;
  gap: 8px;
  padding: 4px 0 0 9px;
  color: #c9573a;
  font-size: 12px;
  font-weight: 700;
  line-height: 20px;
}
.section::before { content: ""; border-left: 6px solid transparent; border-bottom: 6px solid #333; }
.section.line { padding-top: 12px; }
.radios { display: grid; grid-auto-rows: 23px; padding: 7px 0 0 24px; }
.radios label { display: flex; align-items: center; }
.radios input {
  width: 12px;
  height: 12px;
  margin-right: 5px;
  appearance: none;
  border: 1px solid #aaa;
  border-radius: 50%;
  background: #fff;
}
.radios input:checked { background: radial-gradient(circle, #666 0 3px, #fff 4px); }
.field { display: flex; align-items: center; height: 27px; margin: 0 19px 0 33px; }
.color-field { justify-content: space-between; height: 35px; margin-top: 8px; }
.color-btn { display: flex; align-items: center; gap: 7px; width: 44px; height: 27px; padding-left: 8px; border: 1px solid #b4b4b4; background: #fff; }
.alpha-slider { flex: none; width: 35px; height: 12px; margin-left: 11px; }
.spin { display: flex; width: 103px; height: 23px; margin-left: auto; border: 1px solid #b4b4b4; background: #fff; }
.spin input { flex: 1; min-width: 0; padding-left: 6px; }
.spin-arrows { display: flex; flex-direction: column; justify-content: center; gap: 5px; padding-right: 5px; }

input[type="range"] { appearance: none; background: linear-gradient(#a8a8a8, #a8a8a8) center / 100% 1px no-repeat; }
input[type="range"]::-webkit-slider-thumb { appearance: none; width: 2px; height: 10px; background: #666; }
input.zoom::-webkit-slider-thumb { width: 4px; height: 12px; }

.recorder { position: absolute; right: 0; bottom: 71px; }

/* Status bar */
.status { display: flex; align-items: center; height: 20px; padding-left: 7px; background: #f0f0f0; border-top: 1px solid #c6c6c6; }
.proof { margin: 0 18px 0 26px; }
.status-right { display: flex; align-items: center; align-self: stretch; margin-left: auto; padding-right: 7px; }
.note { display: flex; align-items: center; gap: 4px; margin-right: 19px; }
.views { display: flex; align-self: stretch; }
.views button { width: 38px; display: grid; place-items: center; }
.views .current { background: #cbcbcb; }
.zoom-btn { margin: 0 4px; }
.zoom { width: 100px; height: 12px; }
.percent { margin: 0 14px 0 11px; }
```
